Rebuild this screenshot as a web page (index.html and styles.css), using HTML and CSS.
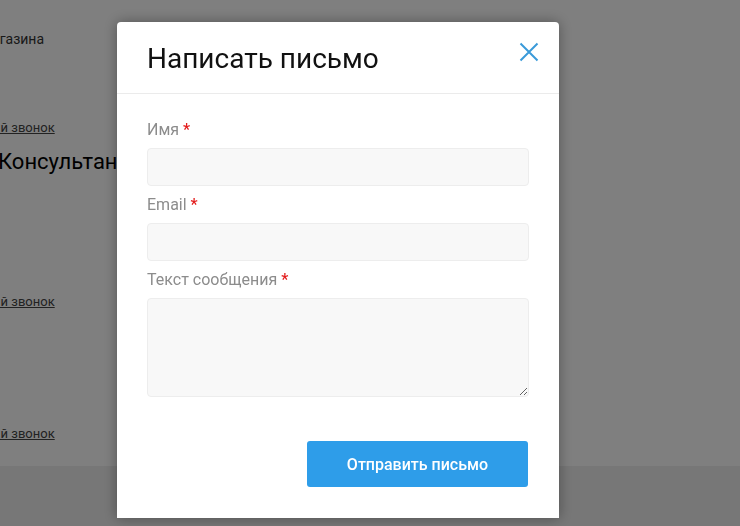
FILE: index.html
```html
<!DOCTYPE html>
<html lang="ru">
<head>
  <meta charset="UTF-8" />
  <meta name="viewport" content="width=device-width, initial-scale=1" />
  <title>Написать письмо</title>
  <link rel="stylesheet" href="styles.css">
</head>

<body>

<div class="page">
  <div class="page-content">
    <p class="store-line">Адрес магазина</p>
    <a href="#" class="callback callback-first">Заказать обратный звонок</a>
    <h3 class="consultant">Консультант</h3>
    <a href="#" class="callback callback-second">Заказать обратный звонок</a>
    <a href="#" class="callback callback-third">Заказать обратный звонок</a>
  </div>
  <footer class="page-footer"></footer>
</div>

<div class="overlay">
  <div class="modal">
    <div class="modal-head">
      <h2>Написать письмо</h2>
      <button class="modal-close" type="button" aria-label="Закрыть">
        <svg width="20" height="20" viewBox="0 0 20 20">
          <path d="M1.5 1.5 L18.5 18.5 M18.5 1.5 L1.5 18.5" stroke="#3a9ad9" stroke-width="2" fill="none" />
        </svg>
      </button>
    </div>

    <form class="modal-body" onsubmit="return false">
      <label for="nameInput">Имя <span class="req">*</span></label>
      <input type="text" id="nameInput" />

      <label for="emailInput">Email <span class="req">*</span></label>
      <input type="email" id="emailInput" />

      <label for="messageInput">Текст сообщения <span class="req">*</span></label>
      <textarea id="messageInput"></textarea>

      <button type="submit" class="send-btn">Отправить письмо</button>
    </form>
  </div>
</div>

</body>
</html>
```

FILE: styles.css
```css
body {
  font-family: Roboto, 'Noto Sans', sans-serif;
  background: #ffffff;
  margin: 0;
  padding: 0;
  overflow: hidden;
}

.page {
  min-height: 526px;
}

.page-content {
  height: 466px;
  overflow: hidden;
  padding-top: 29px;
  box-sizing: border-box;
}

.store-line {
  margin: 0 0 0 -62px;
  font-size: 14px;
  line-height: 20px;
  color: #333;
  white-space: nowrap;
}

.callback {
  display: block;
  font-size: 13px;
  line-height: 20px;
  color: #444;
  text-decoration: underline;
  white-space: nowrap;
  margin-left: -111px;
}

.callback-first {
  margin-top: 69px;
}

.callback-second {
  margin-top: 117px;
}

.callback-third {
  margin-top: 112px;
}

.consultant {
  margin: 11px 0 0 -2px;
  font-size: 22px;
  line-height: 26px;
  font-weight: 400;
  color: #000;
  white-space: nowrap;
}

.page-footer {
  height: 60px;
  background: #eeeeee;
}

/* modal */

.overlay {
  position: fixed;
  top: 0;
  left: 0;
  right: 0;
  bottom: 0;
  background: rgba(0, 0, 0, 0.5);
  padding: 22px 0 0 117px;
}

.modal {
  width: 442px;
  background: white;
  border-radius: 4px 4px 0 0;
  box-shadow: 0 0 14px rgba(0, 0, 0, 0.35);
}

.modal-head {
  display: flex;
  justify-content: space-between;
  padding: 21px 20px 18px 30px;
  border-bottom: 1px solid #ebebeb;
}

.modal-head h2 {
  margin: 0;
  font-size: 28px;
  line-height: 32px;
  font-weight: 400;
  color: #111;
}

.modal-close {
  align-self: flex-start;
  width: 20px;
  height: 20px;
  margin-top: -1px;
  padding: 0;
  border: none;
  background: none;
  cursor: pointer;
}

.modal-close svg {
  display: block;
}

.modal-body {
  padding: 26px 30px 31px;
}

.modal-body label {
  display: block;
  font-size: 16px;
  line-height: 20px;
  color: #8c8c8c;
  margin-bottom: 8px;
}

.req {
  color: #e31b1b;
  font-weight: 500;
}

.modal-body input,
.modal-body textarea {
  display: block;
  width: 100%;
  box-sizing: border-box;
  height: 38px;
  margin: 0 0 9px;
  padding: 8px 12px;
  background: #f8f8f8;
  border: 1px solid #ededed;
  border-radius: 4px;
  font-family: inherit;
  font-size: 15px;
}

.modal-body textarea {
  height: 99px;
  margin-bottom: 44px;
  resize: vertical;
}

.send-btn {
  display: block;
  margin: 0 1px 0 auto;
  width: 221px;
  height: 46px;
  background: #2e9de9;
  color: white;
  border: none;
  border-radius: 3px;
  font-family: inherit;
  font-size: 16px;
  font-weight: 500;
  cursor: pointer;
}

.send-btn:hover {
  background: #1f8cd6;
}
```
